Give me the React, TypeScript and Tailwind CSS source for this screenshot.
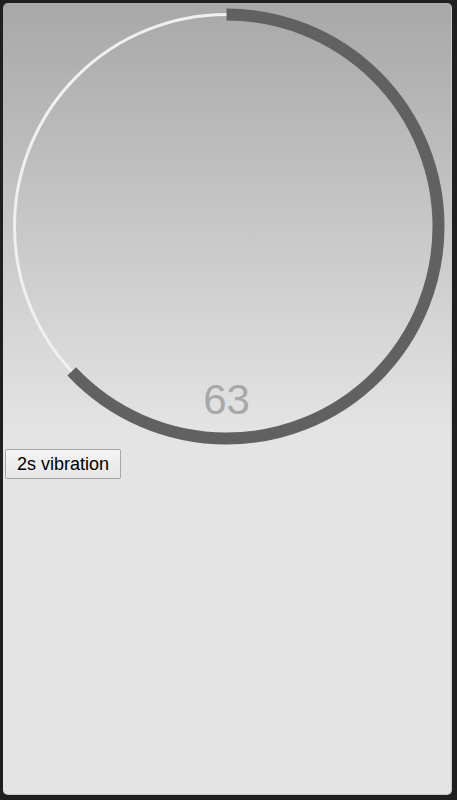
const RADIUS = 212;
const CIRC = 2 * Math.PI * RADIUS;

export default function App() {
  const value = 63;
  const dash = (value / 100) * CIRC;

  return (
    <div className="h-[800px] w-[457px] bg-[#1f1f1f] pb-[5px] pl-[3px] pr-[5px] pt-[3px] font-['Liberation_Sans',Arial,sans-serif]">
      <div className="h-full w-full rounded-[5px] border-b border-r border-[#c8c8c8] bg-[linear-gradient(to_bottom,#a8a8a8_0px,#e4e4e4_430px,#e4e4e4_100%)]">
        <svg width="448" height="446" viewBox="0 0 448 446" className="block">
          <circle cx="223.5" cy="223.5" r={RADIUS} fill="none" stroke="#f0f0f0" strokeWidth="3" />
          <circle
            cx="223.5"
            cy="223.5"
            r={RADIUS}
            fill="none"
            stroke="#616161"
            strokeWidth="12"
            strokeDasharray={`${dash} ${CIRC}`}
            transform="rotate(-90 223.5 223.5)"
          />
          <text
            x="223.5"
            y="411"
            textAnchor="middle"
            fontSize="42"
            fill="#a8a8a8"
            fontFamily="'Liberation Sans', Arial, sans-serif"
          >
            {value}
          </text>
        </svg>
        <button className="ml-[2px] h-[30px] rounded-[2px] border border-[#a6a6a6] bg-[linear-gradient(to_bottom,#f4f4f4,#e6e6e6)] px-[11px] text-[18px] leading-none text-black">
          2s vibration
        </button>
      </div>
    </div>
  );
}
